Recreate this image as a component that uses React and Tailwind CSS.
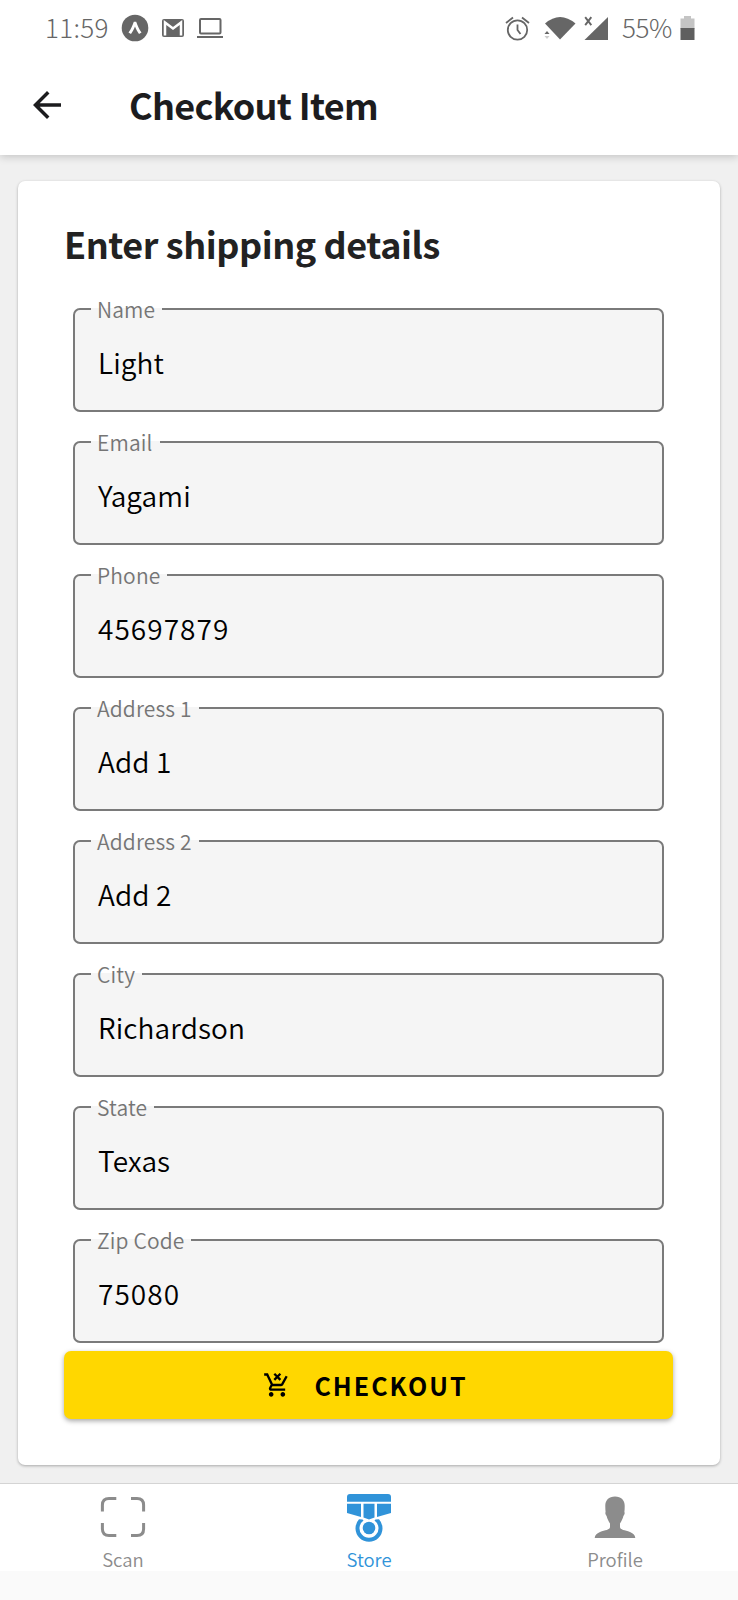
import React from "react";
import { MdArrowBack } from "react-icons/md";

const fields = [
  ["Name", "Light"],
  ["Email", "Yagami"],
  ["Phone", "45697879"],
  ["Address 1", "Add 1"],
  ["Address 2", "Add 2"],
  ["City", "Richardson"],
  ["State", "Texas"],
  ["Zip Code", "75080"],
];

function StatusBar() {
  return (
    <div className="flex h-[55px] items-center pl-[45px] pr-[43px] text-[#666]">
      <span className="-mt-[1px] w-[76px] text-[26px] font-light leading-none tracking-[0.3px]">11:59</span>
      <svg className="h-[28px] w-[28px]" viewBox="0 0 28 28">
        <circle cx="14" cy="14" r="13.300" fill="#666" />
        <path d="M7.500 18.500C10 15.500 11.500 11.500 12.800 7.800H15.200C16.500 11.500 18 15.500 20.500 18.500L18 20C16.500 18 15 15 14 12.500C13 15 11.500 18 10 20Z" fill="#fff" />
      </svg>
      <svg className="ml-[12px] h-[20px] w-[24px]" viewBox="0 0 24 20">
        <rect x="1" y="1" width="22" height="18" rx="2" fill="#666" />
        <path d="M4 17.500V4.500L12 10.500L20 4.500V17.500" fill="none" stroke="#fff" strokeWidth="2.500" />
      </svg>
      <svg className="ml-[11px] h-[22px] w-[28px]" viewBox="0 0 28 22" fill="none" stroke="#666" strokeWidth="2">
        <rect x="4" y="2" width="20.500" height="14.500" rx="1" />
        <path d="M1 20H27" />
      </svg>
      <div className="ml-auto flex items-center">
        <svg className="h-[26px] w-[26px]" viewBox="0 0 26 26" fill="none" stroke="#666" strokeWidth="1.800">
          <circle cx="12.500" cy="15" r="9.700" />
          <path d="M12.500 9.500V15L15.500 19M1 8L8 2.500M17 2.500L24 8" />
        </svg>
        <svg className="ml-[12px] h-[26px] w-[34px]" viewBox="0 0 34 26">
          <path d="M2 8.500Q17 -4.500 32.500 8.500L17 24.500Z" fill="#666" />
          <path d="M1.500 19L4 16L6.500 19Z" fill="#666" />
          <path d="M1.500 21L4 24L6.500 21Z" fill="#ccc" />
        </svg>
        <svg className="ml-[6px] h-[26px] w-[26px]" viewBox="0 0 26 26">
          <path d="M25 2V25H1.500Z" fill="#666" />
          <path d="M2.200 2.200L8.300 10.200M8.300 2.200L2.200 10.200" stroke="#666" strokeWidth="1.900" />
        </svg>
        <span className="-mt-[1px] ml-[13px] w-[58px] text-[26px] font-light leading-none tracking-[-0.4px]">55%</span>
        <svg className="h-[26px] w-[15px]" viewBox="0 0 15 26">
          <path d="M0.500 3.500H4V1H11V3.500H14.500V14H0.500Z" fill="#c4c4c4" />
          <rect x="0.500" y="13" width="14" height="12" fill="#5f5f5f" />
        </svg>
      </div>
    </div>
  );
}

function Field({ label, value }) {
  const numeric = /^\d+$/.test(value);
  return (
    <fieldset className="h-[115px] rounded-[7px] border-2 border-[#7a7a7a] bg-[#f5f5f5]">
      <legend className="ml-[16px] h-[24px] pl-[6px] pr-[7px] text-[21px] font-[350] leading-[24px] tracking-[0.15px] text-[#757575]">
        {label}
      </legend>
      <div
        className={`pl-[23px] pt-[20.500px] text-[28px] font-[350] leading-[40px] text-black ${numeric ? "tracking-[1.050px]" : "tracking-[0.1px]"}`}
      >
        {value}
      </div>
    </fieldset>
  );
}

function CartIcon() {
  return (
    <svg className="h-[28px] w-[28px]" viewBox="0 0 24 24" fill="currentColor">
      <path d="M7 18c-1.100 0-1.990.9-1.990 2S5.900 22 7 22s2-.9 2-2-.9-2-2-2zm10 0c-1.100 0-1.990.9-1.990 2s.89 2 1.990 2 2-.9 2-2-.9-2-2-2zm-9.830-3.250l.03-.12.9-1.630h7.450c.75 0 1.410-.41 1.750-1.030l3.860-7.010L19.420 4h-.01l-1.100 2-2.760 5H8.530l-.13-.27L6.160 6l-.95-2-.94-2H1v2h2l3.600 7.590-1.350 2.450c-.16.28-.25.61-.25.96 0 1.100.9 2 2 2h12v-2H7.420c-.13 0-.25-.11-.25-.25z" />
      <path d="M9.700 2.400L14.900 7.600M14.900 2.400L9.700 7.600" stroke="currentColor" strokeWidth="2" />
    </svg>
  );
}

function ScanIcon() {
  return (
    <svg className="h-[42px] w-[46px]" viewBox="0 0 46 42" fill="none" stroke="#8c8c8c" strokeWidth="3">
      <path d="M2.400 15.500V9Q2.400 2.400 9 2.400H16.300M31 2.400H37Q43.600 2.400 43.600 9V15.500M43.600 27V33Q43.600 39.600 37 39.600H31M16.300 39.600H9Q2.400 39.600 2.400 33V27" />
    </svg>
  );
}

function StoreIcon() {
  return (
    <svg className="-mt-[3px] h-[50px] w-[46px]" viewBox="0 0 46 50" fill="#3093d9">
      <path d="M1 8.800V4Q1 1 4 1H42Q45 1 45 4V8.800Z" />
      <path d="M1 10.800H15V24L1 20ZM17.500 10.800H28.500V24.500L23 26.500L17.500 24.500ZM31 10.800H45V20L31 24Z" />
      <path d="M13 26.300A13.500 13.500 0 1 0 33 26.300L29.500 26.500L28.500 27.500A9.500 9.500 0 1 1 17.500 27.500L16.500 26.500Z" />
      <circle cx="23" cy="35" r="6.300" />
    </svg>
  );
}

function ProfileIcon() {
  return (
    <svg className="h-[42px] w-[42px]" viewBox="0 0 42 42" fill="#8c8c8c">
      <path d="M21 .5C14.500 .5 11 4.500 11.300 10.500C11.300 12.500 11.400 14 11.600 16C11 17 11.500 19 12.600 20C13.200 22.500 14.500 25 16 27.500V31C16 34 11 34 6 36C2.500 37.500 1 39 .7 42H41.300C41 39 39.500 37.500 36 36C31 34 26 34 26 31V27.500C27.500 25 28.800 22.500 29.400 20C30.500 19 31 17 30.400 16C30.600 14 30.700 12.500 30.700 10.500C31 4.500 27.500 .5 21 .5Z" />
    </svg>
  );
}

function Tab({ icon, label, active }) {
  return (
    <div className={`flex flex-1 flex-col items-center ${active ? "text-[#3093d9]" : "text-[#8c8c8c]"}`}>
      <div className="flex h-[52px] items-start">{icon}</div>
      <span className="text-[18.500px] font-[350] leading-[24px]">{label}</span>
    </div>
  );
}

export default function App() {
  return (
    <div className="flex h-[1600px] w-[738px] flex-col overflow-hidden bg-[#f0f0f0] font-['Noto_Sans_CJK_SC','Noto_Sans',sans-serif]">
      <header className="z-10 h-[155px] shrink-0 bg-white shadow-[0_2px_8px_rgba(0,0,0,0.18)]">
        <StatusBar />
        <div className="flex h-[99px] items-center pl-[26px] text-[#1c1c1e]">
          <MdArrowBack className="h-[42px] w-[42px]" />
          <h1 className="-mt-[2px] ml-[61px] text-[36px] font-bold leading-[42px] tracking-[-0.7px]">Checkout Item</h1>
        </div>
      </header>
      <main className="mx-[18px] mt-[26px] h-[1284px] shrink-0 rounded-[7px] bg-white px-[46px] pr-[47px] shadow-[0_1px_3px_rgba(0,0,0,0.3)]">
        <h2 className="flex h-[116px] items-center pt-[8px] text-[36px] font-bold leading-[42px] tracking-[-0.45px] text-[#222]">
          Enter shipping details
        </h2>
        <div className="flex flex-col gap-[18px] pl-[9px] pr-[9px]">
          {fields.map(([label, value]) => (
            <Field key={label} label={label} value={value} />
          ))}
        </div>
        <button className="mt-[8px] flex h-[68px] w-full items-center justify-center rounded-[7px] bg-[#ffd700] pr-[6px] text-black shadow-[0_2px_5px_rgba(0,0,0,0.35)]">
          <CartIcon />
          <span className="ml-[23px] text-[25px] font-bold leading-none tracking-[2px]">CHECKOUT</span>
        </button>
      </main>
      <nav className="mt-[18px] flex h-[88px] shrink-0 border-t border-[#d4d4d4] bg-white pt-[12px]">
        <Tab icon={<ScanIcon />} label="Scan" />
        <Tab icon={<StoreIcon />} label="Store" active />
        <Tab icon={<ProfileIcon />} label="Profile" />
      </nav>
      <div className="flex-1 bg-[#fafafa]" />
    </div>
  );
}
